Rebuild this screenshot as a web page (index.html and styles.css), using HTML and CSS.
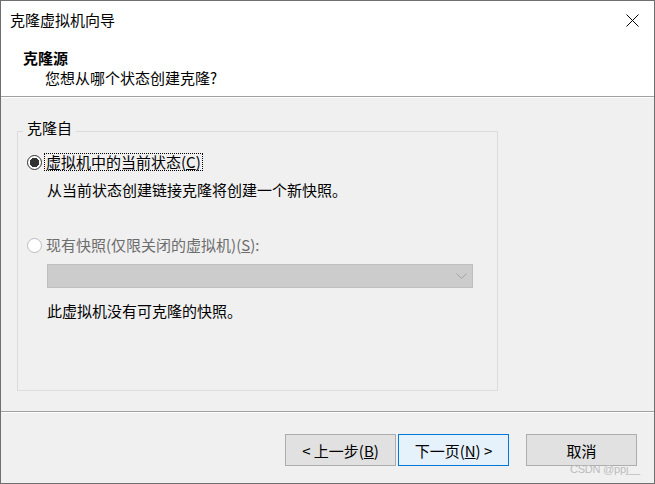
FILE: index.html
```html
<!DOCTYPE html>
<html lang="zh-CN">
<head>
<meta charset="utf-8">
<title>克隆虚拟机向导</title>
<link rel="stylesheet" href="styles.css">
</head>
<body>
<div class="window">
  <div class="titlebar">
    <span class="title">克隆虚拟机向导</span>
    <svg class="close" width="13" height="13" viewBox="0 0 13 13"><path d="M0.5 0.5 L12.5 12.5 M12.5 0.5 L0.5 12.5" stroke="#000" stroke-width="1" fill="none"/></svg>
  </div>
  <div class="header">
    <div class="h-title">克隆源</div>
    <div class="h-sub">您想从哪个状态创建克隆?</div>
  </div>
  <div class="content">
    <fieldset class="group">
      <legend>克隆自</legend>
      <div class="radio-row">
        <span class="radio checked"></span>
        <span class="label focus">虚拟机中的当前状态(<u>C</u>)</span>
      </div>
      <div class="desc">从当前状态创建链接克隆将创建一个新快照。</div>
      <div class="radio-row disabled row2">
        <span class="radio"></span>
        <span class="label">现有快照(仅限关闭的虚拟机)(<u>S</u>):</span>
      </div>
      <div class="combo">
        <svg class="chev" width="11" height="6" viewBox="0 0 11 6"><path d="M0.5 0.5 L5.5 5.5 L10.5 0.5" stroke="#a4a4a4" fill="none"/></svg>
      </div>
      <div class="desc note">此虚拟机没有可克隆的快照。</div>
    </fieldset>
  </div>
  <div class="footer">
    <button class="btn">&lt; 上一步(<u>B</u>)</button>
    <button class="btn primary">下一页(<u>N</u>) &gt;</button>
    <button class="btn cancel">取消</button>
    <span class="watermark">CSDN @ppj__</span>
  </div>
</div>
</body>
</html>
```

FILE: styles.css
```css
* { box-sizing: border-box; }
html, body { margin: 0; padding: 0; }
body {
  font-family: "Noto Sans CJK SC", "Noto Sans", sans-serif;
  font-size: 15px;
  color: #000;
}
.window {
  width: 655px;
  height: 484px;
  border: 1px solid #6f6f6f;
  display: flex;
  flex-direction: column;
  background: #f0f0f0;
  position: relative;
}
.titlebar {
  height: 38px;
  background: #fff;
  display: flex;
  align-items: center;
  padding-left: 9px;
  line-height: 20px;
}
.title { flex: 1; }
.close { margin-right: 15px; }
.header {
  background: #fff;
  padding: 9px 0 8px 0;
  line-height: 20px;
  border-bottom: 1px solid #a0a0a0;
  box-shadow: 0 1px 0 #fff;
}
.h-title { font-weight: bold; padding-left: 22px; }
.h-sub { padding-left: 44px; }
.content {
  flex: 1;
  display: flex;
  padding: 21px 16px 20px 16px;
}
.group {
  width: 481px;
  margin: 0;
  padding: 0 0 0 9px;
  border: 1px solid #dcdcdc;
  min-width: 0;
}
.group legend {
  margin-left: -4px;
  padding: 0 4px 6px 4px;
  line-height: 20px;
}
.radio-row {
  display: flex;
  align-items: center;
  height: 18px;
  margin-top: 9px;
}
.radio {
  width: 15px;
  height: 15px;
  border-radius: 50%;
  border: 1px solid #333;
  background: #fff;
  flex: none;
}
.radio.checked {
  background: radial-gradient(circle, #333 0 4.5px, #fff 5px);
}
.disabled .radio { border-color: #bcbcbc; }
.disabled { color: #6d6d6d; }
.label {
  margin-left: 2px;
  padding: 0 1px;
  line-height: 16px;
  border: 1px dotted transparent;
}
.label.focus { border-color: #000; }
.desc {
  margin-top: 9px;
  margin-left: 20px;
  line-height: 20px;
}
.row2 { margin-top: 36px; }
.combo {
  margin-top: 10px;
  margin-left: 20px;
  width: 426px;
  height: 24px;
  background: #cccccc;
  border: 1px solid #bfbfbf;
  display: flex;
  align-items: center;
  justify-content: flex-end;
  padding-right: 5px;
}
.note { margin-top: 13px; }
.footer {
  height: 72px;
  border-top: 1px solid #a0a0a0;
  box-shadow: inset 0 1px 0 #fff;
  display: flex;
  align-items: flex-start;
  justify-content: flex-end;
  padding: 22px 17px 0 0;
}
.btn {
  width: 111px;
  height: 32px;
  font: inherit;
  font-size: 15px;
  color: #000;
  background: #e1e1e1;
  border: 1px solid #adadad;
  padding: 0;
  margin: 0;
}
.btn.primary {
  margin-left: 2px;
  background: #e5f1fb;
  border-color: #0078d7;
}
.btn.cancel { margin-left: 17px; }
.watermark {
  position: absolute;
  right: 14px;
  bottom: 8px;
  font-family: "Liberation Sans", Arial, sans-serif;
  font-size: 11px;
  letter-spacing: -0.2px;
  color: #bcbcbc;
}
```
